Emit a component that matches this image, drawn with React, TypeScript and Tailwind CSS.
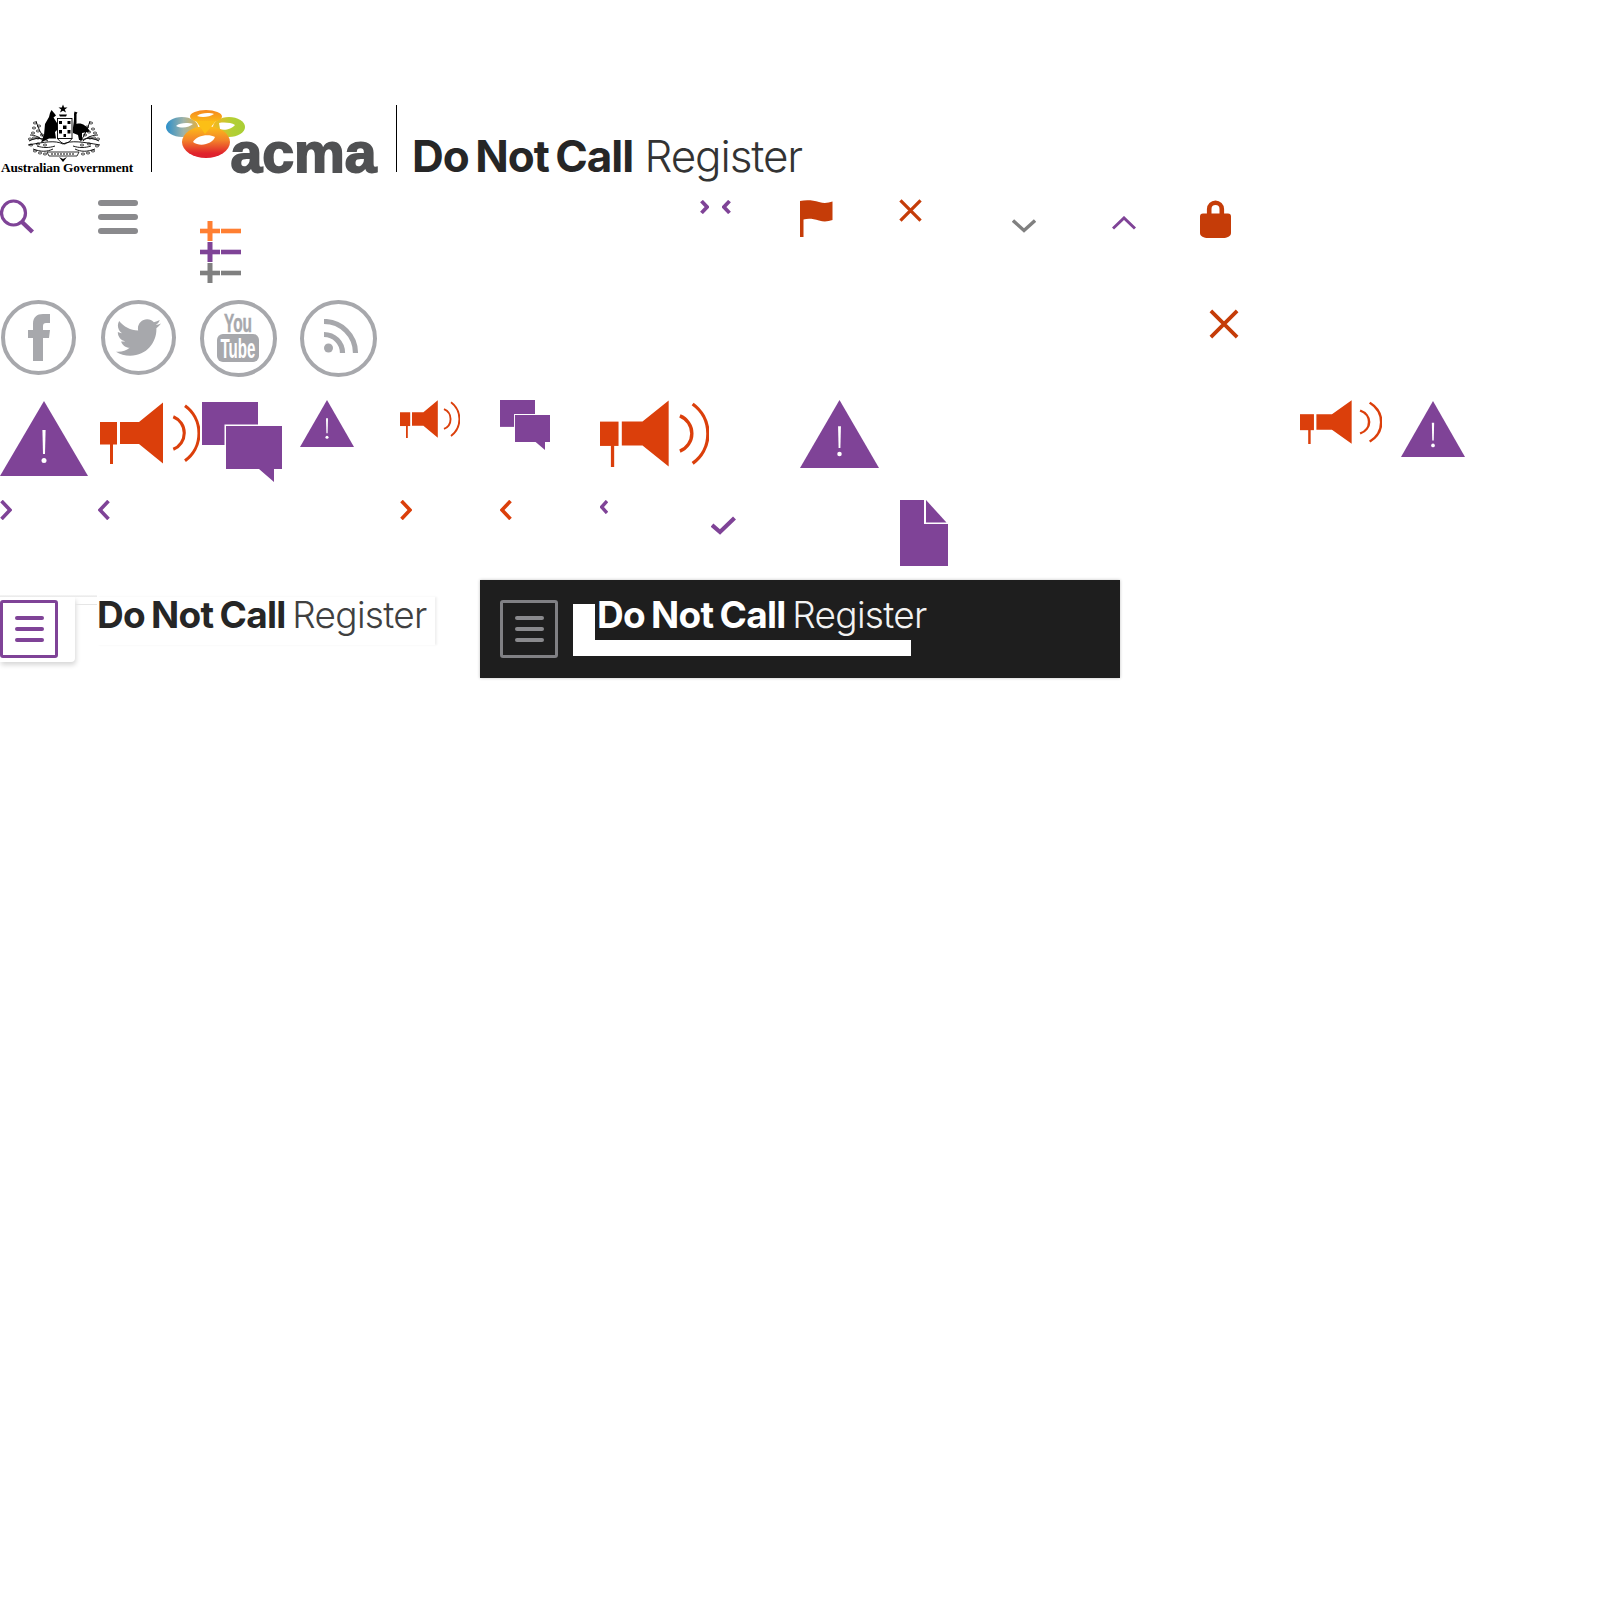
import React from "react";
import { FaTwitter } from "react-icons/fa";

const P = "#7f4397";
const R = "#db3f0b";
const D = "#c53c08";
const G = "#a7a8ac";
const H = "#8a8a8d";

function Tri({ className }: { className: string }) {
  return (
    <svg className={className} viewBox="0 0 88 75" preserveAspectRatio="none">
      <polygon points="44,0 88,75 0,75" fill={P} />
      <polygon points="42.4,29 45.6,29 45,53 43,53" fill="#fff" />
      <circle cx="44" cy="59.5" r="2.5" fill="#fff" />
    </svg>
  );
}

function Mega({ className }: { className: string }) {
  return (
    <svg className={className} viewBox="0 0 100 62" preserveAspectRatio="none">
      <rect x="0" y="20" width="17" height="22.5" fill={R} />
      <rect x="10" y="42" width="3" height="20" fill={R} />
      <polygon points="20,20 39,20 63,0.5 63,61.5 39,42 20,42" fill={R} />
      <path d="M73.3 14.7A17.6 17.6 0 0 1 73.3 47.3" fill="none" stroke={R} strokeWidth="3.1" />
      <path d="M85 3.7A34 34 0 0 1 85 58.7" fill="none" stroke={R} strokeWidth="3.1" />
    </svg>
  );
}

function Chat({ className }: { className: string }) {
  return (
    <svg className={className} viewBox="0 0 80 80" preserveAspectRatio="none">
      <rect x="0" y="0" width="56" height="43" fill={P} />
      <path d="M24 24H80V67H72V80L57 67H24Z" fill={P} stroke="#fff" strokeWidth="3" paintOrder="stroke" />
    </svg>
  );
}

function Chev({ className, d, color, w = 3.6 }: { className: string; d: string; color: string; w?: number }) {
  return (
    <svg className={className} viewBox="0 0 12 20" preserveAspectRatio="none">
      <path d={d} fill="none" stroke={color} strokeWidth={w} />
    </svg>
  );
}

function Cross({ className, w }: { className: string; w: number }) {
  return (
    <svg className={className} viewBox="0 0 24 24">
      <path d="M1.5 1.5L22.5 22.5M22.5 1.5L1.5 22.5" fill="none" stroke={D} strokeWidth={w} />
    </svg>
  );
}

function PlusMinus({ className, color }: { className: string; color: string }) {
  return (
    <svg className={className} viewBox="0 0 41 20">
      <rect x="0" y="7.7" width="20" height="4.6" fill={color} />
      <rect x="7.5" y="0" width="5" height="20" fill={color} />
      <rect x="21" y="7.7" width="20" height="4.6" fill={color} />
    </svg>
  );
}

function Burger({ color }: { color: string }) {
  return (
    <div className="flex flex-col gap-[7.5px] w-[29px]">
      <div className="h-[3.5px] rounded-full" style={{ background: color }} />
      <div className="h-[3.5px] rounded-full" style={{ background: color }} />
      <div className="h-[3.5px] rounded-full" style={{ background: color }} />
    </div>
  );
}

function Title({ className, color, tone, boldClass, lightClass }: { className: string; color: string; tone: string; boldClass: string; lightClass: string }) {
  return (
    <div className={className} style={{ fontFamily: "Inter, 'Open Sans', sans-serif" }}>
      <span className={boldClass} style={{ color }}>Do Not Call</span>
      <span className={lightClass} style={{ color: tone }}> Register</span>
    </div>
  );
}

function Crest({ className }: { className: string }) {
  const sprigs = [
    "M38 40C30 36 20 38 3 41", "M38 40C46 36 58 38 75 41", "M4 37C12 33 18 34 23 37", "M74 37C66 33 60 34 55 37",
    "M8 45C16 48 22 48 28 45", "M70 45C62 48 56 48 50 45", "M11 17C13 24 16 30 20 35", "M65 17C63 24 60 30 57 35",
    "M5 31C10 31 14 33 18 37", "M73 31C68 31 62 33 58 37", "M12 42C18 44 24 44 30 42", "M66 42C60 44 54 44 48 42",
  ];
  const dots = [[10,19],[14,22],[9,24],[13,27],[66,19],[62,23],[68,25],[64,28],[5,35],[9,34],[13,34],[73,35],[69,34],[65,34],[10,47],[15,49],[20,50],[68,47],[63,49],[58,50],[17,31],[60,31],[6,41],[72,42],[13,40],[64,40],[20,41],[57,41],[8,29],[70,29]];
  return (
    <svg className={className} viewBox="0 0 80 60">
      <polygon points="38,0.5 39.2,3.4 42.5,3.4 39.8,5.4 41,8.6 38,6.8 35,8.6 36.2,5.4 33.5,3.4 36.8,3.4" fill="#000" />
      <path d="M34 10.5H42L41 12.5H35Z" fill="#000" />
      <path d="M26.5 6L29.5 9.5L31 11.5L28.5 13.5L32 19L33 25L30 28L31 34.5L24 34.5L16 38.5L19 31L20 20L24 13L25 9Z" fill="#000" />
      <path d="M49.5 7.5L52.5 8.5L51.5 10L51.5 20C56 18.5 61 21 65 27.5L57 29L57 36L54 36L53 31L48 29C47.5 22 49.5 18 49 10Z" fill="#000" />
      <rect x="32.5" y="14.5" width="14.5" height="20" fill="#fff" stroke="#000" strokeWidth="0.9" />
      <path d="M34 17H37V20H34ZM42.5 17H45.5V20H42.5ZM38 21.5H41.5V25H38ZM34 26H37V29.5H34ZM42.5 26H45.5V29.5H42.5ZM38.5 30H41V33H38.5Z" fill="#000" />
      <path d="M32.5 34.5C35 38 37 39 39.7 40C42 39 45 38 47 34.5" fill="none" stroke="#000" strokeWidth="0.9" />
      <path d="M22 48H54L52 52H24Z" fill="#fff" stroke="#000" strokeWidth="0.8" />
      <path d="M26 50H50" stroke="#000" strokeWidth="1.2" strokeDasharray="2 1" />
      <path d="M34 53L38 58L42 53L38 55Z" fill="#000" />
      {sprigs.map((d, i) => <path key={i} d={d} fill="none" stroke="#000" strokeWidth="0.9" />)}
      {dots.map(([x, y], i) => <ellipse key={i} cx={x} cy={y} rx="1.7" ry="1" fill="none" stroke="#000" strokeWidth="0.7" />)}
    </svg>
  );
}

function AcmaPetals({ className }: { className: string }) {
  return (
    <svg className={className} viewBox="0 0 80 48">
      <defs>
        <linearGradient id="pl" x1="0" x2="1" y1="0" y2="0">
          <stop offset="0" stopColor="#2a8fcb" />
          <stop offset="0.55" stopColor="#9fb3a8" />
          <stop offset="1" stopColor="#e0b040" />
        </linearGradient>
        <linearGradient id="pr" x1="0" x2="1" y1="0" y2="0">
          <stop offset="0" stopColor="#f4b621" />
          <stop offset="0.6" stopColor="#b3cf34" />
          <stop offset="1" stopColor="#a9ce35" />
        </linearGradient>
        <linearGradient id="pb" x1="0" x2="0" y1="0" y2="1">
          <stop offset="0" stopColor="#fdc017" />
          <stop offset="0.45" stopColor="#f3822a" />
          <stop offset="0.85" stopColor="#e0242c" />
          <stop offset="1" stopColor="#dc1f2e" />
        </linearGradient>
        <linearGradient id="pt" x1="0" x2="0" y1="0" y2="1">
          <stop offset="0" stopColor="#f5871f" />
          <stop offset="1" stopColor="#fcbf16" />
        </linearGradient>
      </defs>
      <ellipse cx="16" cy="17" rx="16" ry="10" fill="url(#pl)" />
      <ellipse cx="63" cy="17" rx="16" ry="10" fill="url(#pr)" />
      <path d="M10 16C14 12.5 22 12.5 27 14C24 17 16 19 10 16Z" fill="#fff" />
      <path d="M53 13C58 12 65 12.5 69 15C66 19 58 21 54 19Z" fill="#fff" />
      <ellipse cx="40" cy="32" rx="24" ry="16" fill="url(#pb)" />
      <ellipse cx="40" cy="6.5" rx="16" ry="6.5" fill="url(#pt)" />
      <path d="M30 11L39 24L50 11Z" fill="#fcbf16" />
      <path d="M31 6C35 2.5 44 2.5 48 4C44 7 36 8 31 6Z" fill="#fff" />
      <path d="M27 32C30 26 42 23 49 27C47 33 35 38 27 32Z" fill="#fff" />
    </svg>
  );
}

export default function App() {
  return (
    <div className="w-[1600px] h-[1600px] bg-white overflow-hidden pt-[105px] flex flex-col">
      {/* header logos */}
      <header className="flex items-start h-[95px] shrink-0">
        <div className="w-[151px] flex flex-col">
          <Crest className="ml-[25px] -mt-px w-[80px] h-[60px]" />
          <div className="ml-px -mt-[4px] text-[13.3px] leading-[15px] font-bold text-black whitespace-nowrap tracking-[-0.17px]" style={{ fontFamily: "'Liberation Serif', serif" }}>
            Australian Government
          </div>
        </div>
        <div className="w-px h-[67px] bg-black" />
        <svg className="w-[244px] h-[70px] overflow-visible" viewBox="0 0 244 70">
          <text x="78.5" y="66.5" fontFamily="'Liberation Sans', sans-serif" fontWeight="700" fontSize="56" textLength="146" lengthAdjust="spacingAndGlyphs" fill="#505153" stroke="#505153" strokeWidth="1.8">acma</text>
        </svg>
        <div className="w-px h-[67px] bg-black" />
        <Title className="ml-[15px] mt-[25px] text-[44px] leading-[53px] whitespace-nowrap" color="#262626" tone="#333333" boldClass="font-bold tracking-[-1px] [word-spacing:-3px]" lightClass="font-light tracking-[-1.1px]" />
      </header>
      <AcmaPetals className="absolute left-[166px] top-[110px] w-[80px] h-[48px]" />

      {/* icon sheet: cells on a 100px pitch */}
      <section className="grid grid-cols-[repeat(16,100px)] auto-rows-[100px] items-start justify-items-start shrink-0">
        <svg className="col-start-1 -mt-px w-[35px] h-[35px]" viewBox="0 0 35 35">
          <circle cx="13.5" cy="14" r="12" fill="none" stroke={P} strokeWidth="3.2" />
          <path d="M22 23L32.5 33" stroke={P} strokeWidth="4.4" />
        </svg>
        <div className="col-start-2 ml-[-2px] w-[40px] flex flex-col gap-[8px]">
          <div className="h-[6px] rounded-full bg-[#8a8a8d]" />
          <div className="h-[6px] rounded-full bg-[#8a8a8d]" />
          <div className="h-[6px] rounded-full bg-[#8a8a8d]" />
        </div>
        <div className="col-start-3 mt-[21px] flex flex-col gap-px">
          <PlusMinus className="w-[41px] h-[20px]" color="#ff7f32" />
          <PlusMinus className="w-[41px] h-[20px]" color={P} />
          <PlusMinus className="w-[41px] h-[20px]" color="#808080" />
        </div>
        <div className="col-start-8 flex gap-[13px]">
          <Chev className="w-[9px] h-[14px]" d="M2 1.5L9.5 10L2 18.5" color={P} w={5} />
          <Chev className="w-[9px] h-[14px]" d="M10 1.5L2.5 10L10 18.5" color={P} w={5} />
        </div>
        <svg className="col-start-9 w-[33px] h-[37px]" viewBox="0 0 33 37">
          <path d="M0 1C6 -0.5 13 0 19 2C24 3.5 28 3 32.5 1.5V20C28 21.5 24 22 19 20.5C13 18.5 8 18 3.5 19.5V37H0Z" fill={D} />
        </svg>
        <Cross className="col-start-10 -ml-px -mt-px w-[23px] h-[23px]" w={3.4} />
        <svg className="col-start-11 ml-[12px] mt-[19px] w-[24px] h-[14px]" viewBox="0 0 24 14">
          <path d="M1 1.5L12 11.5L23 1.5" fill="none" stroke="#808080" strokeWidth="3.4" />
        </svg>
        <svg className="col-start-12 ml-[12px] mt-[16px] w-[24px] h-[14px]" viewBox="0 0 24 14">
          <path d="M1 12.5L12 2L23 12.5" fill="none" stroke={P} strokeWidth="3" />
        </svg>
        <svg className="col-start-13 w-[31px] h-[38px]" viewBox="0 0 31 38">
          <path d="M9.2 15V9A6.3 6.3 0 0 1 21.8 9V15" fill="none" stroke={D} strokeWidth="4.6" />
          <path d="M3 13.5H28A3 3 0 0 1 31 16.5V33C31 36.5 27 38 23 38H8C4 38 0 36.5 0 33V16.5A3 3 0 0 1 3 13.5Z" fill={D} />
        </svg>

        <div className="col-start-1 ml-px relative w-[75px] h-[75px] rounded-full border-[4px] border-[#a7a8ac]">
          <svg className="absolute left-[23px] top-[10px] w-[22px] h-[47px]" viewBox="0 0 22 47">
            <path d="M5 47V24H0V16H5V10C5 3 9 0 15 0H22V9H18C16 9 15 10 15 12V16H22L21 24H15V47Z" fill={G} />
          </svg>
        </div>
        <div className="col-start-2 ml-px w-[75px] h-[75px] rounded-full border-[4px] border-[#a7a8ac] flex items-center justify-center">
          <FaTwitter className="w-[45px] h-[45px] text-[#a7a8ac]" />
        </div>
        <div className="col-start-3 relative w-[77px] h-[77px] rounded-full border-[4px] border-[#a7a8ac]">
          <svg className="absolute left-[13px] top-[8px] w-[45px] h-[54px] overflow-visible" viewBox="0 0 45 54">
            <text x="21" y="19.5" textAnchor="middle" textLength="28" lengthAdjust="spacingAndGlyphs" fontFamily="'Liberation Sans', sans-serif" fontWeight="700" fontSize="25" fill={G} stroke={G} strokeWidth="0.5">You</text>
            <rect x="0" y="22" width="42" height="28" rx="6" fill={G} />
            <text x="21" y="45.5" textAnchor="middle" textLength="35" lengthAdjust="spacingAndGlyphs" fontFamily="'Liberation Sans', sans-serif" fontWeight="700" fontSize="27" fill="#fff">Tube</text>
          </svg>
        </div>
        <div className="col-start-4 relative w-[77px] h-[77px] rounded-full border-[4px] border-[#a7a8ac]">
          <svg className="absolute left-[20px] top-[15px] w-[38px] h-[38px]" viewBox="0 0 38 38">
            <circle cx="4.5" cy="29" r="4.5" fill={G} />
            <path d="M0 2.5A31.5 31.5 0 0 1 31.5 34" fill="none" stroke={G} strokeWidth="5.2" />
            <path d="M0 15.5A18.5 18.5 0 0 1 18.5 34" fill="none" stroke={G} strokeWidth="5.2" />
          </svg>
        </div>
        <Cross className="col-start-13 ml-[9px] mt-[9px] w-[30px] h-[30px]" w={3} />

        <Tri className="col-start-1 mt-px w-[88px] h-[75px]" />
        <Mega className="col-start-2 mt-[2px] w-[100px] h-[62px]" />
        <Chat className="col-start-3 ml-[2px] mt-[2px] w-[80px] h-[80px]" />
        <Tri className="col-start-4 w-[54px] h-[47px]" />
        <Mega className="col-start-5 w-[60px] h-[38px]" />
        <Chat className="col-start-6 w-[50px] h-[50px]" />
        <Mega className="col-start-7 w-[109px] h-[67px]" />
        <Tri className="col-start-9 w-[79px] h-[68px]" />
        <Mega className="col-start-14 w-[82px] h-[44px]" />
        <Tri className="col-start-15 ml-px mt-px w-[64px] h-[56px]" />

        <Chev className="col-start-1 w-[12px] h-[20px]" d="M1.5 1L10 10L1.5 19" color={P} />
        <Chev className="col-start-2 -ml-[2px] w-[12px] h-[20px]" d="M10.5 1L2 10L10.5 19" color={P} />
        <Chev className="col-start-5 w-[12px] h-[20px]" d="M1.5 1L10 10L1.5 19" color={R} />
        <Chev className="col-start-6 w-[12px] h-[20px]" d="M10.5 1L2 10L10.5 19" color={R} />
        <Chev className="col-start-7 w-[8px] h-[14px]" d="M10.5 1.5L2.5 10L10.5 18.5" color={P} w={5} />
        <svg className="col-start-8 ml-[11px] mt-[16px] w-[25px] h-[19px]" viewBox="0 0 25 19">
          <path d="M1 9L9 16L23.5 2" fill="none" stroke={P} strokeWidth="4.2" />
        </svg>
        <svg className="col-start-10 w-[48px] h-[66px]" viewBox="0 0 48 66">
          <path d="M0 0H24V24H48V66H0Z" fill={P} />
          <path d="M26 0L46.5 22.5H26Z" fill={P} />
        </svg>
      </section>

      {/* header variants */}
      <section className="flex -mt-[20px] shrink-0">
        <div className="relative w-[480px] pt-[17px] flex items-start">
          <div className="absolute left-0 top-[15px] w-[97px] h-[2px] bg-gradient-to-b from-[#f6f6f6] to-[#e8e8e8]" />
          <div className="absolute left-[75px] top-[24px] w-[22px] h-px bg-[#e6e6e6]" />
          <div className="w-[75px] h-[65px] pt-[3px] bg-white rounded-br-[4px] shadow-[1px_3px_5px_rgba(0,0,0,0.16)]">
            <div className="w-[58px] h-[58px] border-[3px] border-[#7f4397] rounded-[3px] flex items-center justify-center">
              <Burger color={P} />
            </div>
          </div>
          <div className="ml-[22px] w-[338px] h-[48px] bg-white shadow-[2px_0_2px_rgba(0,0,0,0.06)]">
            <Title className="-mt-[4px] text-[37px] leading-[44px] whitespace-nowrap" color="#262626" tone="#404040" boldClass="font-bold tracking-[-0.7px] [word-spacing:-2px]" lightClass="font-light tracking-[-0.7px] [word-spacing:-3px]" />
          </div>
        </div>

        <div className="flex items-start gap-[15px] w-[640px] h-[98px] pl-[20px] pt-[20px] bg-[#1e1e1e] shadow-[0_0_3px_rgba(0,0,0,0.25)]">
          <div className="w-[58px] h-[58px] border-[3px] border-[#808084] rounded-[3px] flex items-center justify-center">
            <Burger color={H} />
          </div>
          <div className="relative mt-[4px] w-[338px] h-[52px] bg-white">
            <div className="absolute left-[22px] top-0 w-[330px] h-[36px] bg-[#1e1e1e]" />
            <Title className="absolute left-[24px] -top-[11px] text-[37px] leading-[44px] whitespace-nowrap" color="#ffffff" tone="#f2f2f2" boldClass="font-bold tracking-[-0.7px] [word-spacing:-2px]" lightClass="font-light tracking-[-0.7px] [word-spacing:-3px]" />
          </div>
        </div>
      </section>
    </div>
  );
}
